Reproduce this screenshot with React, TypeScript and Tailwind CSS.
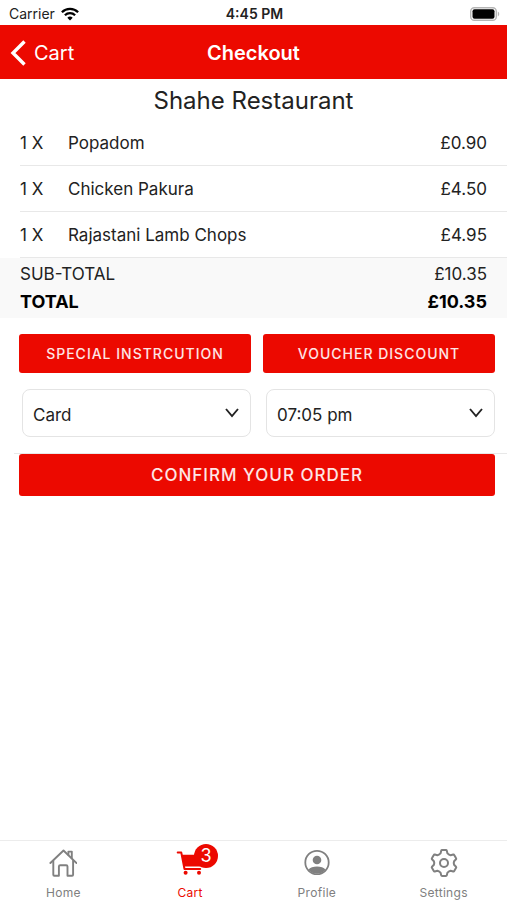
import type { ReactNode } from 'react'

const ITEMS = [
  { qty: 1, name: 'Popadom', price: '£0.90' },
  { qty: 1, name: 'Chicken Pakura', price: '£4.50' },
  { qty: 1, name: 'Rajastani Lamb Chops', price: '£4.95' },
]

const TABS = [
  { label: 'Home', icon: <HomeIcon />, active: false, badge: 0 },
  { label: 'Cart', icon: <CartIcon />, active: true, badge: 3 },
  { label: 'Profile', icon: <ProfileIcon />, active: false, badge: 0 },
  { label: 'Settings', icon: <SettingsIcon />, active: false, badge: 0 },
]

function HomeIcon() {
  return (
    <svg width="28" height="28" viewBox="0 0 28 28" fill="none" stroke="currentColor" strokeWidth="1.9" strokeLinecap="round" strokeLinejoin="round">
      <path d="M1.4 14 14.500 1.500l13 12.500" />
      <path d="M4.300 11.800v14c0 .6.4 1 1 1h4.600v-9.200c0-.8.5-1.300 1.300-1.300h6c.8 0 1.300.5 1.300 1.300v9.200h4.600c.6 0 1-.4 1-1v-14" />
      <path d="M19.400 5.800V2.600h3.400v6.600" />
    </svg>
  )
}

function CartIcon() {
  return (
    <svg width="28" height="28" viewBox="0 0 28 28" fill="currentColor">
      <path d="M1.700 3.600h3.600l3.200 16.400h15.700" fill="none" stroke="currentColor" strokeWidth="2" strokeLinecap="round" strokeLinejoin="round" />
      <path d="M5.400 5.800h21.400l-2.400 11.800H8z" />
      <circle cx="9.600" cy="23.800" r="2" />
      <circle cx="23" cy="23.800" r="2" />
    </svg>
  )
}

function ProfileIcon() {
  return (
    <svg width="28" height="28" viewBox="0 0 28 28" fill="currentColor">
      <circle cx="14" cy="13.500" r="11.700" fill="none" stroke="currentColor" strokeWidth="1.800" />
      <circle cx="14" cy="11" r="4.300" />
      <path d="M5.400 20.700c1.600-2.100 5-3.200 8.600-3.200s7 1.100 8.600 3.200a11.500 11.500 0 0 1-17.200 0z" />
    </svg>
  )
}

function SettingsIcon() {
  return (
    <svg width="28" height="28" viewBox="-14 -14 28 28" fill="none" stroke="currentColor" strokeWidth="2" strokeLinejoin="round">
      <path d="M-3.500-9.600-2.800-12.200Q-2.600-12.900-1.900-12.900H1.900Q2.600-12.900 2.800-12.200L3.500-9.600Q5-8 6.600-7.800L9.200-8.500Q9.900-8.700 10.200-8.100L12.100-4.800Q12.500-4.200 12-3.700L10.100-1.800Q9.400 0 10.100 1.800L12 3.700Q12.500 4.200 12.100 4.800L10.200 8.100Q9.900 8.700 9.200 8.500L6.600 7.800Q5 8 3.500 9.600L2.800 12.200Q2.600 12.900 1.900 12.900H-1.900Q-2.600 12.900-2.800 12.200L-3.500 9.600Q-5 8-6.600 7.800L-9.200 8.500Q-9.900 8.700-10.200 8.100L-12.100 4.800Q-12.500 4.200-12 3.700L-10.100 1.800Q-9.400 0-10.100-1.800L-12-3.700Q-12.500-4.200-12.100-4.800L-10.200-8.100Q-9.900-8.700-9.200-8.500L-6.600-7.800Q-5-8-3.500-9.600Z" />
      <circle r="4" />
    </svg>
  )
}

function WifiIcon() {
  return (
    <svg width="18" height="14" viewBox="0 0 18 14" fill="none" stroke="black" strokeWidth="2.300">
      <path d="M.9 5.200a11.600 11.600 0 0 1 16.200 0" />
      <path d="M3.900 8.300a7.300 7.300 0 0 1 10.200 0" />
      <path d="M9 13.600 6.300 10.800a3.900 3.900 0 0 1 5.400 0z" fill="black" stroke="none" />
    </svg>
  )
}

function BatteryIcon() {
  return (
    <svg width="30" height="14" viewBox="0 0 30 14">
      <rect x=".7" y=".7" width="25.600" height="12.600" rx="3.600" fill="white" stroke="#b5b5b5" strokeWidth="1.400" />
      <rect x="2.500" y="2.300" width="22" height="9.400" rx="2" fill="black" />
      <path d="M27.800 4.600c1.900.8 1.900 4 0 4.800z" fill="#b5b5b5" />
    </svg>
  )
}

function SelectBox({ label, options }: { label: string; options: string[] }) {
  return (
    <div className="relative ml-[3px]">
      <select aria-label={label} className="block w-full h-12 appearance-none rounded-lg border border-[#e4e4e4] bg-white pl-2.5 pr-9 pt-1.5 text-[17px] text-[#222]">
        {options.map(option => (
          <option key={option}>{option}</option>
        ))}
      </select>
      <svg className="pointer-events-none absolute right-3 top-[19px]" width="14" height="10" viewBox="0 0 14 10" fill="none" stroke="#222" strokeWidth="1.900">
        <path d="m1 1 6 7 6-7" />
      </svg>
    </div>
  )
}

function RedButton({ children, className }: { children: ReactNode; className: string }) {
  return (
    <button type="button" className={`w-full rounded-[3px] bg-[#ec0900] font-medium text-white/90 ${className}`}>
      {children}
    </button>
  )
}

export default function App() {
  return (
    <div className="min-h-screen flex flex-col bg-white text-[#222] font-['Inter',sans-serif]">
      {/* Status bar */}
      <div className="h-[25px] grid grid-cols-3 items-center pt-0.5 pl-[9px] pr-[7px] text-sm">
        <div className="flex items-center gap-1.5">
          <span>Carrier</span>
          <WifiIcon />
        </div>
        <span className="text-center font-semibold">4:45 PM</span>
        <div className="flex justify-end">
          <BatteryIcon />
        </div>
      </div>

      {/* Header */}
      <header className="h-[54px] grid grid-cols-3 items-center bg-[#ec0900] px-2.5 pt-0.5 text-xl text-white">
        <a href="#cart" className="flex items-center gap-2">
          <svg width="16" height="26" viewBox="0 0 16 26" fill="none" stroke="white" strokeWidth="3.400">
            <path d="M14.500 1.500 3 13l11.500 11.500" />
          </svg>
          Cart
        </a>
        <h1 className="text-center font-semibold">Checkout</h1>
      </header>

      <main className="flex-1">
        <h2 className="h-[41px] pt-1 text-center text-2xl leading-9">Shahe Restaurant</h2>

        <ul className="pl-5 text-[17px]">
          {ITEMS.map(item => (
            <li key={item.name} className="h-[46px] flex items-center border-b border-[#e8e8e8] pr-5 pt-0.5">
              <span className="w-12">{item.qty} X</span>
              <span className="flex-1">{item.name}</span>
              <span>{item.price}</span>
            </li>
          ))}
        </ul>

        <dl className="h-[60px] bg-[#f9f9f9] px-5 pt-0.5 text-[17px] leading-7">
          <div className="flex justify-between">
            <dt>SUB-TOTAL</dt>
            <dd>£10.35</dd>
          </div>
          <div className="flex justify-between text-lg leading-7 font-bold text-black">
            <dt>TOTAL</dt>
            <dd>£10.35</dd>
          </div>
        </dl>

        <div className="grid grid-cols-2 gap-x-3 gap-y-4 pt-4 pb-4 pl-[19px] pr-3">
          <RedButton className="h-[39px] text-sm tracking-[1px]">SPECIAL INSTRCUTION</RedButton>
          <RedButton className="h-[39px] text-sm tracking-[1px]">VOUCHER DISCOUNT</RedButton>
          <SelectBox label="Payment method" options={['Card', 'Cash']} />
          <SelectBox label="Collection time" options={['07:05 pm', '07:20 pm', '07:35 pm']} />
        </div>

        <div className="ml-3.5 border-t border-[#e8e8e8] pl-[5px] pr-3">
          <RedButton className="h-[42px] pt-0.5 text-[17px] tracking-[1px]">CONFIRM YOUR ORDER</RedButton>
        </div>
      </main>

      {/* Tab bar */}
      <nav className="h-[60px] grid grid-cols-4 border-t border-[#ececec] text-xs">
        {TABS.map(tab => (
          <a
            key={tab.label}
            href={`#${tab.label.toLowerCase()}`}
            className={`flex flex-col items-center pt-2 ${tab.active ? 'text-[#ec0900]' : 'text-[#808080]'}`}
          >
            <span className="relative">
              {tab.icon}
              {tab.badge > 0 && (
                <span className="absolute -top-[5px] left-[18px] w-6 h-6 rounded-full bg-[#ec0900] text-center text-lg leading-6 text-white">
                  {tab.badge}
                </span>
              )}
            </span>
            <span className="pt-2 tracking-wide">{tab.label}</span>
          </a>
        ))}
      </nav>
    </div>
  )
}
